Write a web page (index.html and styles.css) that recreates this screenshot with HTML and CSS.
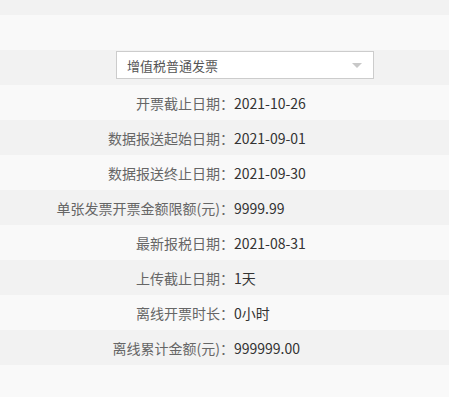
FILE: index.html
```html
<!DOCTYPE html>
<html lang="zh-CN">
<head>
  <meta charset="UTF-8" />
  <title>发票参数</title>
  <link rel="stylesheet" href="styles.css">
</head>
<body>
  <div class="rows">
    <div class="row row-top"></div>
    <div class="row"></div>
    <div class="row row-select">
      <div class="select">
        <span>增值税普通发票</span>
        <i class="caret"></i>
      </div>
    </div>
    <div class="row"><span class="label">开票截止日期：</span><span class="value">2021-10-26</span></div>
    <div class="row"><span class="label">数据报送起始日期：</span><span class="value">2021-09-01</span></div>
    <div class="row"><span class="label">数据报送终止日期：</span><span class="value">2021-09-30</span></div>
    <div class="row"><span class="label">单张发票开票金额限额(元)：</span><span class="value">9999.99</span></div>
    <div class="row"><span class="label">最新报税日期：</span><span class="value">2021-08-31</span></div>
    <div class="row"><span class="label">上传截止日期：</span><span class="value">1天</span></div>
    <div class="row"><span class="label">离线开票时长：</span><span class="value">0小时</span></div>
    <div class="row"><span class="label">离线累计金额(元)：</span><span class="value">999999.00</span></div>
    <div class="row row-bottom"></div>
  </div>
</body>
</html>
```

FILE: styles.css
```css
body {
  margin: 0;
  font-family: "Microsoft YaHei", "Noto Sans CJK SC", sans-serif;
  background: #f9f9f9;
  color: #333;
}

.rows {
  display: flex;
  flex-direction: column;
}

.row {
  height: 35px;
  display: flex;
  align-items: center;
  font-size: 14px;
  background: #f9f9f9;
}

.row:nth-child(odd) {
  background: #f2f2f2;
}

.row-top {
  height: 15px;
}

.row-bottom {
  height: 32px;
}

.row-select {
  align-items: flex-start;
  padding-top: 1px;
  height: 34px;
}

.label {
  width: 234px;
  text-align: right;
  color: #666;
}

.value {
  color: #333;
}

.select {
  margin-left: 116px;
  width: 258px;
  height: 28px;
  box-sizing: border-box;
  border: 1px solid #ccc;
  background: #fff;
  display: flex;
  align-items: center;
  justify-content: space-between;
  padding: 0 11px 0 10px;
  font-size: 13px;
  color: #555;
}

.caret {
  width: 0;
  height: 0;
  border-left: 5px solid transparent;
  border-right: 5px solid transparent;
  border-top: 5px solid #c8c8c8;
}
```
